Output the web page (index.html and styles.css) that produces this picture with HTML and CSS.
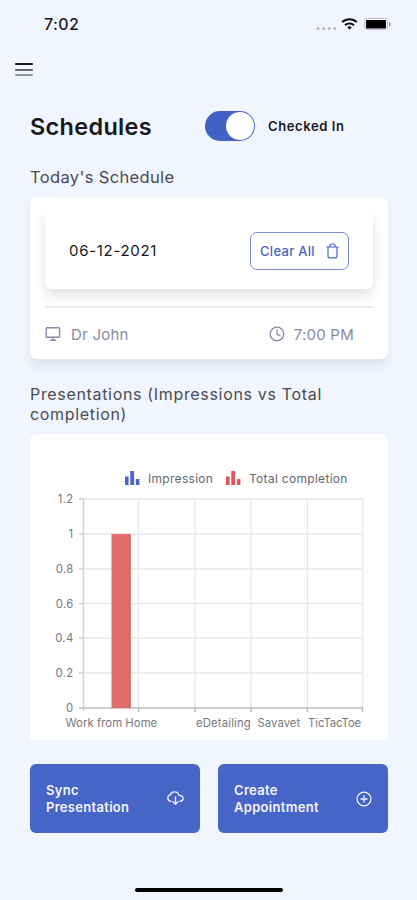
FILE: index.html
```html
<!DOCTYPE html>
<html lang="en">
<head>
<meta charset="utf-8">
<title>Schedules</title>
<link rel="stylesheet" href="styles.css">
</head>
<body>
<div class="app">
  <div class="status">
    <span class="time">7:02</span>
    <svg class="status-icons" width="76" height="16" viewBox="0 0 76 16">
      <g fill="#b4b6bf"><circle cx="2" cy="12.4" r="1.5"/><circle cx="7.6" cy="12.4" r="1.5"/><circle cx="13.2" cy="12.4" r="1.5"/><circle cx="18.6" cy="12.4" r="1.5"/></g>
      <g fill="none" stroke="#111" stroke-width="2.1"><path d="M26.2 6.1a10.7 10.7 0 0 1 14.6 0"/><path d="M29 9.2a6.7 6.7 0 0 1 9 0"/></g>
      <path d="M33.5 13.8l-2.3-2.5a3.4 3.4 0 0 1 4.6 0z" fill="#111"/>
      <rect x="48.5" y="2.5" width="23" height="11" rx="3" fill="#fff" stroke="#b9bac1"/>
      <rect x="50" y="4" width="20" height="8.4" rx="1" fill="#000"/>
      <path d="M73 6v4.4q2-.8 2-2.2T73 6z" fill="#999"/>
    </svg>
  </div>
  <div class="menu"><i></i><i></i><i></i></div>
  <header class="head">
    <h1>Schedules</h1>
    <span class="toggle"><span class="knob"></span></span>
    <span class="checked">Checked In</span>
  </header>
  <h2 class="today">Today's Schedule</h2>
  <section class="card schedule">
    <div class="date-card">
      <span class="date">06-12-2021</span>
      <button class="clear"><span>Clear All</span>
        <svg width="13" height="16" viewBox="0 0 13 16" fill="none" stroke="#4764c9" stroke-width="1.2" stroke-linecap="round" stroke-linejoin="round"><path d="M.8 4h11.4M2 4v9.2q0 1.6 1.6 1.6h5.8q1.6 0 1.6-1.6V4M4 3.8V2.4Q4 1 5.4 1h2.2Q9 1 9 2.4v1.4"/></svg>
      </button>
    </div>
    <div class="visit">
      <svg width="16" height="16" viewBox="0 0 16 16" fill="none" stroke="#858ba3" stroke-width="1.4" stroke-linejoin="round"><rect x="1.2" y="1.7" width="13.4" height="9.6" rx="1"/><path d="M8 11.4v2.8M4.8 14.3h6.3"/></svg>
      <span class="person">Dr John</span>
      <svg width="16" height="16" viewBox="0 0 16 16" fill="none" stroke="#858ba3" stroke-width="1.3" stroke-linecap="round"><circle cx="8" cy="8" r="6.8"/><path d="M8 4v4.2l2.9 1.5"/></svg>
      <span class="hour">7:00 PM</span>
    </div>
  </section>
  <h2 class="pres">Presentations (Impressions vs Total completion)</h2>
  <section class="card chart">
    <div class="legend">
      <svg width="15" height="14" viewBox="0 0 15 14" fill="#4b62d6"><path d="M0 5.4h3.6V14H0zM5.3 0h3.8v14H5.300zM10.800 8h3.600v6h-3.600z"/></svg>
      <span class="l1">Impression</span>
      <svg width="15" height="14" viewBox="0 0 15 14" fill="#e15759"><path d="M0 5.400h3.600V14H0zM5.300 0h3.800v14H5.300zM10.800 8h3.600v6h-3.600z"/></svg>
      <span class="l2">Total completion</span>
    </div>
    <svg class="plot" width="358" height="250" viewBox="0 0 358 250">
      <g stroke="#e9e9eb" stroke-width="1.3"><path d="M53 9H333M53 44H333M53 79H333M53 113.700H333M53 148H333M53 183H333M108.500 9V218M165 9V218M221 9V218M277.400 9V218M332.800 9V218"/></g>
      <g stroke="#d2d2d4" stroke-width="1.5"><path d="M53.500 9V221M49 9h5M49 44h5M49 79h5M49 113.700h5M49 148h5M49 183h5"/></g>
      <path d="M49 218H333M108.500 218v4M165 218v4M221 218v4M277.400 218v4M332.500 218v4" stroke="#bdbdbf" stroke-width="1.4"/>
      <path d="M81.500 44h19v174h-19z" fill="#e26c69"/><path d="M100 44v174" stroke="#d95153" stroke-width="1"/>
      <g class="ticks" text-anchor="end"><text x="43.500" y="13">1.2</text><text x="43.500" y="48">1</text><text x="43.500" y="83">0.8</text><text x="43.500" y="117.700">0.6</text><text x="43.500" y="152">0.4</text><text x="43.500" y="187">0.2</text><text x="43.500" y="222">0</text></g>
      <g class="ticks"><text x="35.500" y="236.700" textLength="92">Work from Home</text><text x="166" y="236.700" textLength="55">eDetailing</text><text x="227.500" y="236.700" textLength="43">Savavet</text><text x="278" y="236.700" textLength="53.500">TicTacToe</text></g>
    </svg>
  </section>
  <div class="actions">
    <button class="action"><span>Sync<br>Presentation</span>
      <svg width="17" height="15" viewBox="0 0 17 15" fill="none" stroke="#f2f5ff" stroke-width="1.3" stroke-linecap="round" stroke-linejoin="round"><path d="M4 10.300C2 10 .8 8.700.8 7c0-1.700 1-2.900 2.500-3.200C4 2 5.500.9 7.500.9c2.300 0 4 1.500 4.500 3.500 2.500 0 4.100 1.200 4.100 3.200 0 1.600-1.200 2.700-3.200 2.700M8.500 6v7M6 10.800l2.500 2.600 2.500-2.600"/></svg>
    </button>
    <button class="action"><span>Create<br>Appointment</span>
      <svg width="16" height="16" viewBox="0 0 16 16" fill="none" stroke="#f2f5ff" stroke-width="1.3" stroke-linecap="round"><circle cx="8" cy="8" r="6.900"/><path d="M8 5v6M5 8h6"/></svg>
    </button>
  </div>
  <div class="home"></div>
</div>
</body>
</html>
```
FILE: styles.css
```css
* { box-sizing: border-box; }
body { margin: 0; background: #f1f5ff; font-family: Inter, "Liberation Sans", sans-serif; color: #17181c; }
.app { width: 417px; height: 900px; overflow: hidden; display: flex; flex-direction: column; padding: 0 29px 0 30px; }
svg { display: block; flex: none; }
h1, h2 { margin: 0; }
button { font-family: inherit; margin: 0; }
.status { height: 48px; flex: none; display: flex; justify-content: space-between; align-items: center; margin: 0 -4px 0 14px; }
.time { font-size: 16px; font-weight: 500; letter-spacing: .4px; }
.menu { width: 18px; height: 13px; flex: none; margin: 15px 0 0 -15px; display: flex; flex-direction: column; justify-content: space-between; }
.menu i { height: 2px; background: #17181c; border-radius: 1px; }
.menu i:nth-child(2) { background: #666870; }
.menu i:nth-child(3) { background: #94969e; }
.head { height: 40px; flex: none; margin-top: 30px; display: flex; align-items: center; }
h1 { width: 175px; font-size: 23.5px; font-weight: 600; letter-spacing: .3px; }
.toggle { width: 50px; height: 30px; border-radius: 15px; background: #4261c7; padding: 1px; display: flex; justify-content: flex-end; }
.knob { width: 28px; height: 28px; border-radius: 50%; background: #fff; }
.checked { margin-left: 13px; font-size: 13px; font-weight: 600; letter-spacing: .6px; }
h2 { font-weight: 400; color: #4a4c53; flex: none; }
.today { height: 51px; line-height: 20px; padding-top: 21px; font-size: 16.5px; letter-spacing: .35px; }
.card { background: #fff; flex: none; border-radius: 7px; }
.schedule { height: 162px; padding: 13px 15px 0; box-shadow: 0 7px 8px rgba(80, 90, 100, .1); }
.date-card { height: 79px; border-radius: 7px; padding: 2px 24px 0 24px; display: flex; align-items: center; justify-content: space-between; box-shadow: 0 6px 12px rgba(0, 0, 0, .12); }
.date { font-size: 15px; letter-spacing: .7px; }
.clear { width: 99px; height: 38px; border: 1px solid #7d8bd8; border-radius: 7px; background: #fff; display: flex; align-items: center; justify-content: space-between; padding: 0 9px; color: #4764c9; font-size: 13px; font-weight: 500; letter-spacing: .3px; }
.visit { height: 54px; margin-top: 17px; border-top: 2px solid #e9eaec; display: flex; align-items: center; font-size: 15px; color: #868b9f; letter-spacing: .25px; }
.person { margin-left: 10px; margin-right: auto; }
.hour { margin-left: 9px; margin-right: 19px; }
.pres { height: 75px; padding-top: 25px; line-height: 20px; font-size: 16px; letter-spacing: .67px; }
.chart { height: 306px; padding-top: 36px; border-radius: 7px 7px 0 0; box-shadow: 0 -3px 5px rgba(80, 80, 80, .025); }
.legend { height: 16px; display: flex; align-items: center; padding-left: 95px; font-size: 12px; color: #65666b; letter-spacing: .3px; }
.l1 { width: 78px; margin-left: 8px; white-space: nowrap; }
.l2 { margin-left: 8px; white-space: nowrap; }
.plot { margin-top: 4px; }
.ticks { font: 11.3px Inter, sans-serif; letter-spacing: .3px; fill: #77787b; }
.actions { height: 69px; flex: none; margin-top: 24px; display: flex; gap: 18px; }
.action { flex: 1; border: 0; border-radius: 6px; background: #4764c7; color: #f4f6ff; padding: 0 16px; display: flex; align-items: center; justify-content: space-between; text-align: left; font-size: 13px; line-height: 17px; font-weight: 600; letter-spacing: .3px; }
.home { width: 148px; height: 4px; flex: none; border-radius: 2px; background: #000; margin: 55px 0 0 105px; }
```
